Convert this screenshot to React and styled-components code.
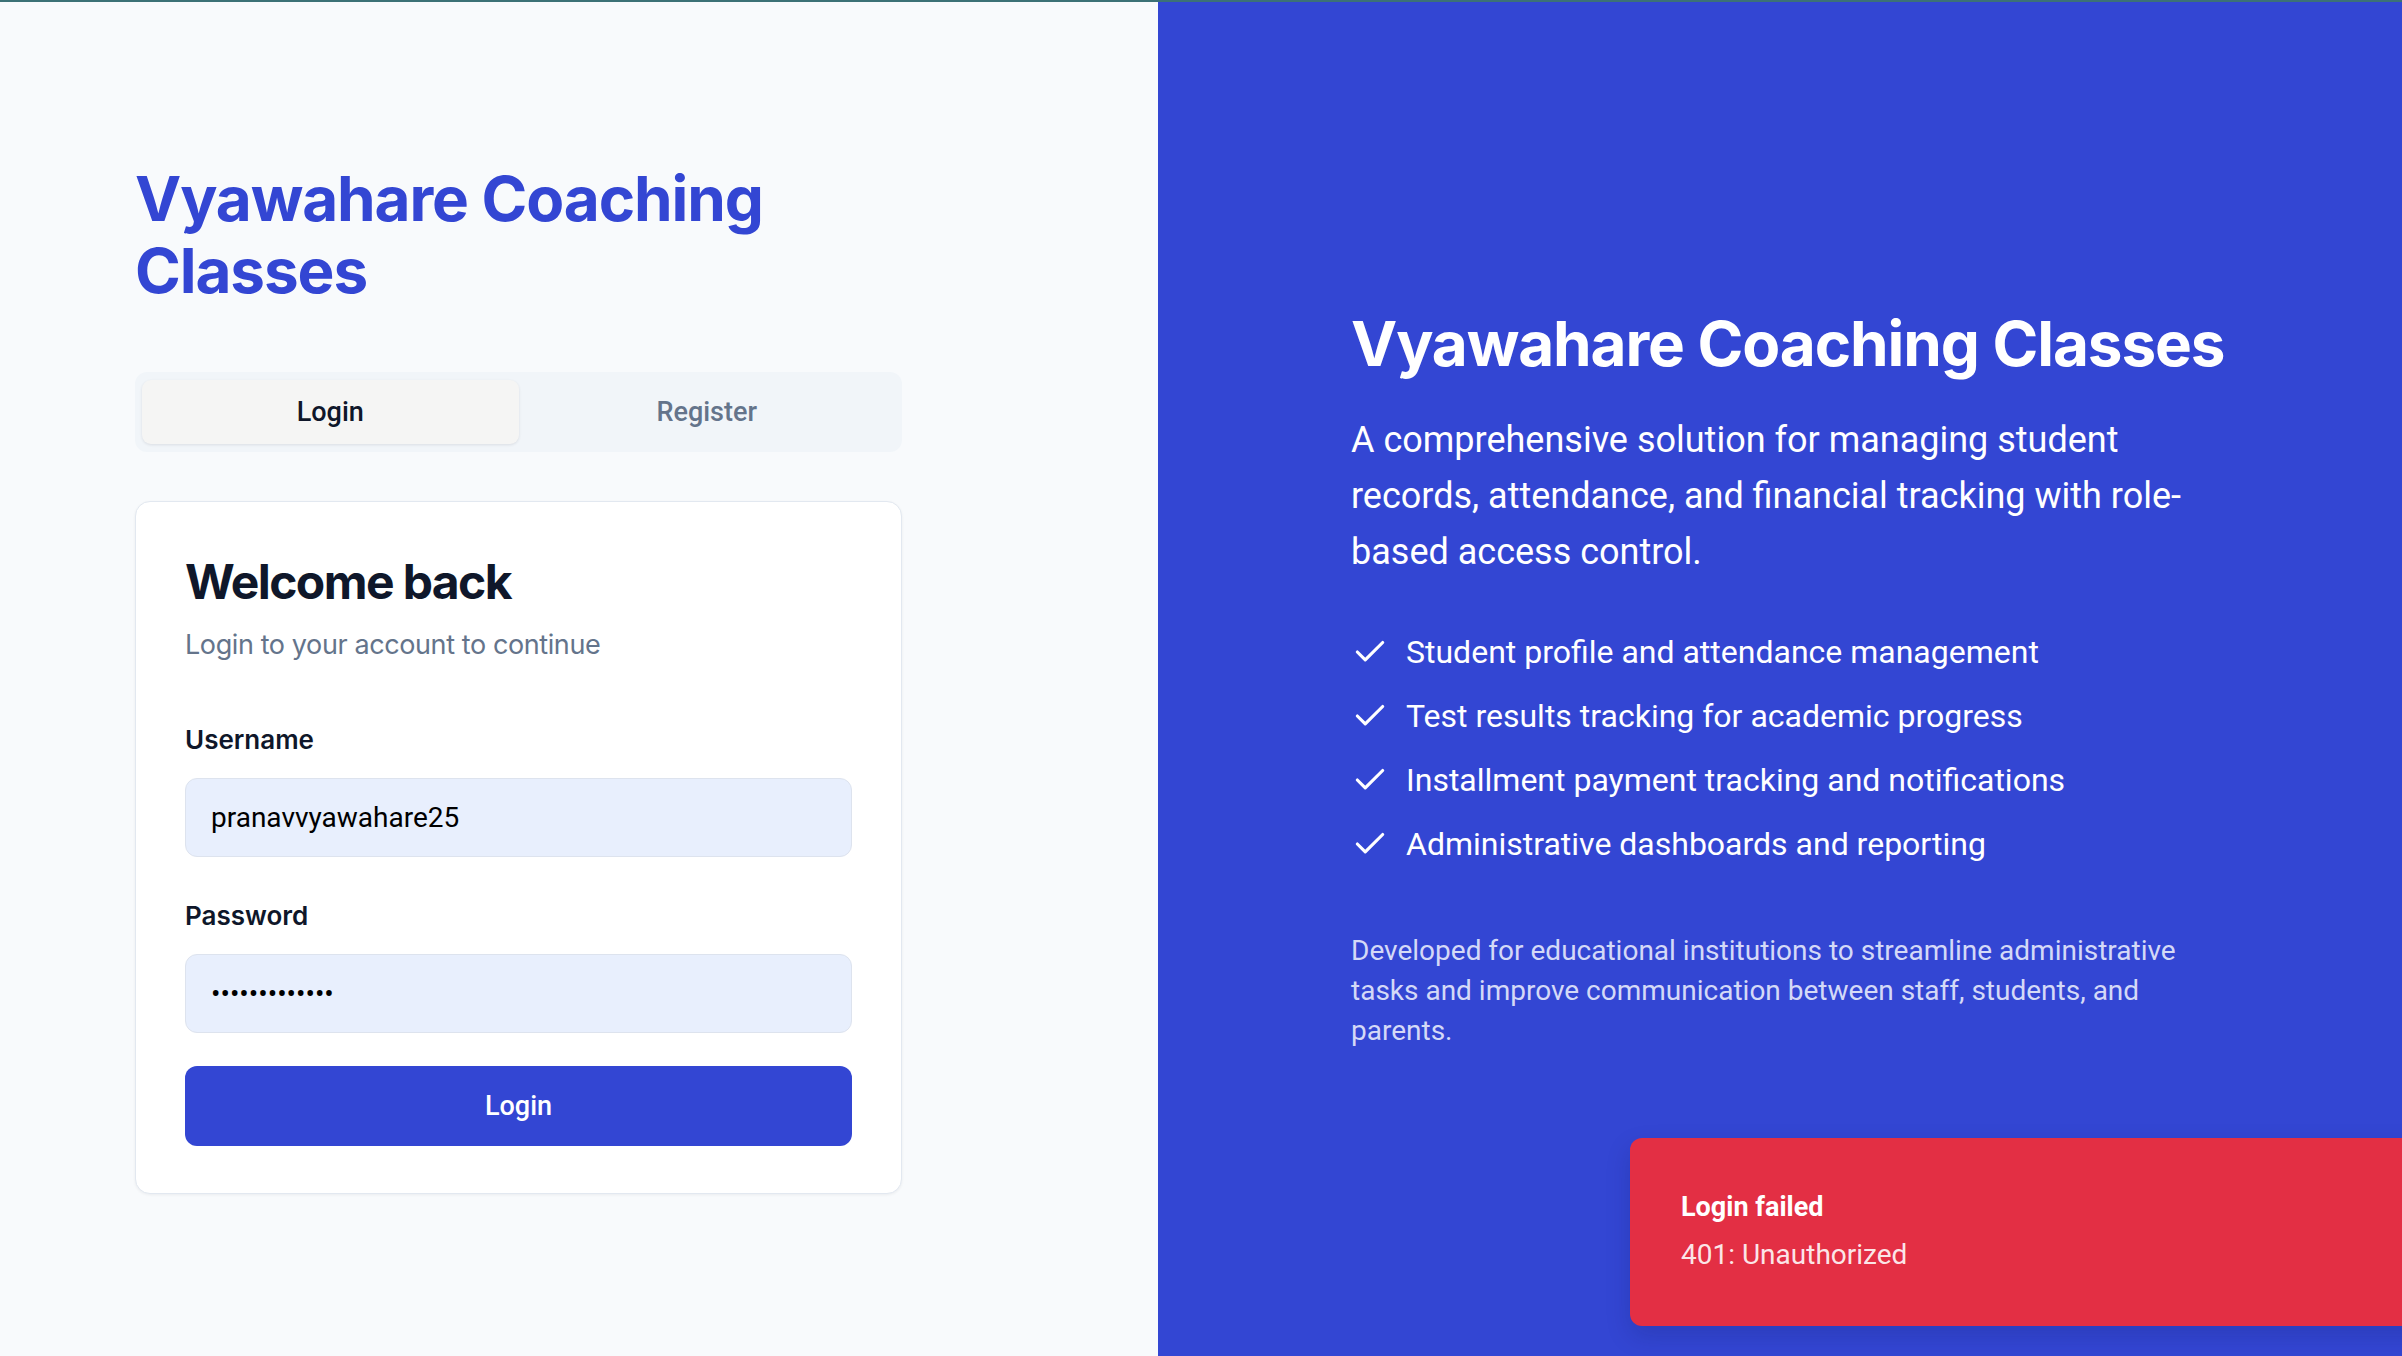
import React from 'react';
import styled, {createGlobalStyle} from 'styled-components';
import {Check} from 'lucide-react';

const GlobalStyle = createGlobalStyle`
  html, body {
    margin: 0;
    padding: 0;
  }
  body {
    font-family: Roboto, "Liberation Sans", sans-serif;
    background: #f8fafc;
  }
  *, *::before, *::after {
    box-sizing: border-box;
  }
`;

const BRAND = '#3346d3';

const Page = styled.div`
  position: relative;
  display: flex;
  width: 100vw;
  height: 100vh;
  overflow: hidden;

  &::before {
    content: '';
    position: absolute;
    top: 0;
    left: 0;
    right: 0;
    height: 2px;
    background: #3c7176;
    z-index: 5;
  }
`;

const LeftPanel = styled.section`
  flex: 0 0 1158px;
  background: #f8fafc;
  padding: 163px 0 0 135px;
`;

const LeftInner = styled.div`
  width: 767px;
`;

const BrandTitle = styled.h1`
  margin: 0;
  font-family: Inter, "Liberation Sans", sans-serif;
  font-weight: 700;
  font-size: 62px;
  line-height: 72px;
  letter-spacing: -1.1px;
  color: ${BRAND};
  max-width: 700px;
`;

const Tabs = styled.div`
  margin-top: 65px;
  height: 80px;
  padding: 8px 7px;
  display: grid;
  grid-template-columns: 1fr 1fr;
  background: #f1f5f9;
  border-radius: 12px;
`;

const Tab = styled.div`
  display: flex;
  align-items: center;
  justify-content: center;
  border-radius: 9px;
  font-family: Roboto, "Liberation Sans", sans-serif;
  font-weight: 500;
  font-size: 27px;
  color: ${p => (p.$active ? '#0f172a' : '#64748b')};
  background: ${p => (p.$active ? '#f5f5f4' : 'transparent')};
  box-shadow: ${p => (p.$active ? '0 1px 3px rgba(15, 23, 42, 0.1)' : 'none')};
`;

const Card = styled.div`
  margin-top: 49px;
  background: #fff;
  border: 1px solid #e2e8f0;
  border-radius: 15px;
  box-shadow: 0 1px 3px rgba(15, 23, 42, 0.06);
  padding: 51px 49px 47px;
`;

const CardTitle = styled.h2`
  margin: 0;
  font-family: Inter, "Liberation Sans", sans-serif;
  font-weight: 700;
  font-size: 48px;
  line-height: 58px;
  letter-spacing: -1.6px;
  color: #0f172a;
`;

const CardSub = styled.p`
  margin: 14px 0 0;
  font-family: Inter, "Liberation Sans", sans-serif;
  font-size: 27px;
  line-height: 40px;
  letter-spacing: -0.4px;
  color: #64748b;
`;

const Form = styled.form`
  margin-top: 58px;
  display: flex;
  flex-direction: column;
`;

const Field = styled.div`
  display: flex;
  flex-direction: column;
  gap: 21px;
  & + & {
    margin-top: 42px;
  }
`;

const Label = styled.label`
  font-family: Inter, "Liberation Sans", sans-serif;
  font-weight: 600;
  font-size: 26px;
  line-height: 34px;
  color: #0f172a;
`;

const Input = styled.input`
  height: 79px;
  width: 100%;
  padding: 0 25px;
  border: 1px solid #dde3ee;
  border-radius: 12px;
  background: #e8effd;
  font-family: Roboto, "Liberation Sans", sans-serif;
  font-size: 28px;
  color: #000;
  outline: none;
`;

const SubmitButton = styled.button`
  margin-top: 33px;
  height: 80px;
  border: none;
  border-radius: 12px;
  background: ${BRAND};
  color: #fff;
  font-family: Roboto, "Liberation Sans", sans-serif;
  font-weight: 500;
  font-size: 27px;
  cursor: pointer;
`;

const RightPanel = styled.section`
  flex: 1;
  background: ${BRAND};
  color: #fff;
  padding: 308px 0 0 193px;
`;

const RightInner = styled.div`
  width: 870px;
`;

const HeroTitle = styled.h2`
  margin: 0;
  font-family: Inter, "Liberation Sans", sans-serif;
  font-weight: 700;
  font-size: 62px;
  line-height: 72px;
  letter-spacing: -1.1px;
  white-space: nowrap;
`;

const Lead = styled.p`
  margin: 32px 0 0;
  font-size: 36px;
  line-height: 56px;
`;

const Features = styled.ul`
  margin: 50px 0 0;
  padding: 0;
  list-style: none;
  display: flex;
  flex-direction: column;
  gap: 20px;
`;

const Feature = styled.li`
  display: flex;
  align-items: center;
  gap: 17px;
  height: 44px;
  font-size: 32px;
  line-height: 44px;
  svg {
    flex: 0 0 auto;
  }
`;

const Footnote = styled.p`
  margin: 65px 0 0;
  font-size: 28px;
  line-height: 40px;
  color: #d4d9f7;
`;

const Toast = styled.div`
  position: absolute;
  left: 1630px;
  top: 1138px;
  width: 860px;
  height: 188px;
  padding: 49px 51px;
  background: #e32f44;
  border-radius: 12px;
  box-shadow: 0 10px 24px rgba(10, 20, 80, 0.18);
  color: #fff;
`;

const ToastTitle = styled.div`
  font-weight: 700;
  font-size: 27px;
  line-height: 40px;
`;

const ToastText = styled.div`
  margin-top: 8px;
  font-size: 28px;
  line-height: 40px;
  color: rgba(255, 255, 255, 0.9);
`;

const features = [
  'Student profile and attendance management',
  'Test results tracking for academic progress',
  'Installment payment tracking and notifications',
  'Administrative dashboards and reporting'
];

const App = () => (
  <Page>
    <GlobalStyle/>
    <LeftPanel>
      <LeftInner>
        <BrandTitle>Vyawahare Coaching Classes</BrandTitle>

        <Tabs>
          <Tab $active>Login</Tab>
          <Tab>Register</Tab>
        </Tabs>

        <Card>
          <CardTitle>Welcome back</CardTitle>
          <CardSub>Login to your account to continue</CardSub>

          <Form onSubmit={e => e.preventDefault()}>
            <Field>
              <Label htmlFor="username">Username</Label>
              <Input id="username" type="text" value="pranavvyawahare25" readOnly/>
            </Field>
            <Field>
              <Label htmlFor="password">Password</Label>
              <Input id="password" type="password" value="pranav@123456" readOnly/>
            </Field>
            <SubmitButton type="submit">Login</SubmitButton>
          </Form>
        </Card>
      </LeftInner>
    </LeftPanel>

    <RightPanel>
      <RightInner>
        <HeroTitle>Vyawahare Coaching Classes</HeroTitle>
        <Lead>
          A comprehensive solution for managing student records, attendance, and financial tracking with role-based access control.
        </Lead>
        <Features>
          {features.map(text => (
            <Feature key={text}>
              <Check size={38} strokeWidth={2}/>
              {text}
            </Feature>
          ))}
        </Features>
        <Footnote>
          Developed for educational institutions to streamline administrative tasks and improve communication between staff, students, and parents.
        </Footnote>
      </RightInner>
    </RightPanel>

    <Toast role="alert">
      <ToastTitle>Login failed</ToastTitle>
      <ToastText>401: Unauthorized</ToastText>
    </Toast>
  </Page>
);

export default App;
